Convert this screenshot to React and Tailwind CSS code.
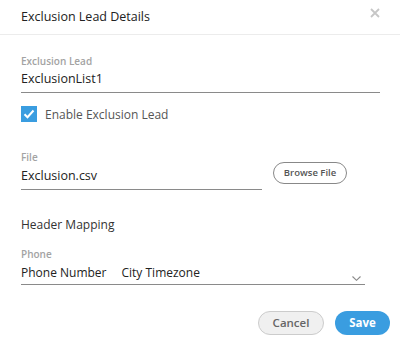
import React, { useState } from 'react';

const Label = ({ children }) => (
  <div className="h-[12px] text-[10px] font-semibold text-[#a3a3a3] leading-[12px]">{children}</div>
);

export default function App() {
  const [enabled, setEnabled] = useState(true);

  return (
    <div className="w-[400px] h-[346px] bg-white overflow-hidden" style={{ fontFamily: '"Open Sans", sans-serif' }}>
      <div className="h-[35px] flex items-center justify-between pl-[21px] pr-[20px] border-b border-[#ececec]">
        <div className="text-[12.5px] text-[#222]">Exclusion Lead Details</div>
        <button className="text-[#c6c6c6] -mt-[9px]">
          <svg width="10" height="10" viewBox="0 0 10 10">
            <path d="M1 1L9 9M9 1L1 9" stroke="currentColor" strokeWidth="1.8" />
          </svg>
        </button>
      </div>

      <div className="pl-[21px] pt-[20px]">
        <div className="w-[359px]">
          <Label>Exclusion Lead</Label>
          <div className="h-[26px] border-b border-[#8a8a8a] text-[12.5px] text-[#222] flex items-center">ExclusionList1</div>
        </div>

        <label className="mt-[13px] h-[16px] flex items-center gap-[8px] cursor-pointer">
          <span
            onClick={() => setEnabled(!enabled)}
            className="w-[16px] h-[16px] bg-[#3a9de0] flex items-center justify-center"
          >
            {enabled && (
              <svg width="12" height="10" viewBox="0 0 12 10">
                <path d="M1.5 5.2L4.5 8.2L10.5 1.5" stroke="white" strokeWidth="2" fill="none" />
              </svg>
            )}
          </span>
          <span className="text-[12px] text-[#555] pt-[1px]">Enable Exclusion Lead</span>
        </label>

        <div className="mt-[29px] flex items-end">
          <div className="w-[241px]">
            <Label>File</Label>
            <div className="h-[27px] border-b border-[#8a8a8a] text-[12.5px] text-[#222] flex items-center">Exclusion.csv</div>
          </div>
          <button className="ml-[11px] mb-[6px] w-[74px] h-[22px] rounded-full border border-[#888] text-[9.5px] text-[#555] font-semibold">Browse File</button>
        </div>

        <div className="mt-[27px] h-[16px] leading-[16px] text-[12px] text-[#333]">Header Mapping</div>

        <div className="mt-[15px] w-[344px]">
          <Label>Phone</Label>
          <div className="mt-[2px] h-[23px] border-b border-[#8a8a8a] text-[12px] text-[#222] flex items-center">
            <span>Phone Number</span>
            <span className="ml-[15px]">City Timezone</span>
            <svg className="ml-auto mr-[4px] mt-[10px]" width="9" height="5" viewBox="0 0 9 5">
              <path d="M0.5 0.5L4.5 4.3L8.5 0.5" stroke="#8a8a8a" strokeWidth="1.1" fill="none" />
            </svg>
          </div>
        </div>

        <div className="mt-[26px] flex justify-end gap-[11px] pr-[10px]">
          <button className="w-[66px] h-[24px] rounded-full border border-[#ccc] bg-[#f0f0f0] text-[11.5px] font-semibold text-[#666]">Cancel</button>
          <button className="w-[55px] h-[24px] rounded-full bg-[#3a9de0] text-[11.5px] font-bold text-white">Save</button>
        </div>
      </div>
    </div>
  );
}
